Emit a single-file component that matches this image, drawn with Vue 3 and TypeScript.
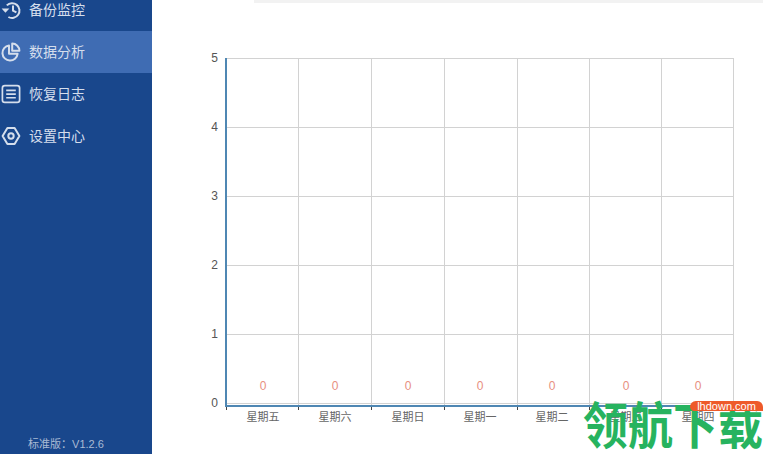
<template>
  <div class="app">
    <aside class="sidebar">
      <nav class="menu">
        <div
          v-for="item in menu"
          :key="item.label"
          class="menu-item"
          :class="{ active: item.active }"
        >
          <svg class="menu-icon" viewBox="0 0 20 20" fill="none" stroke="currentColor" stroke-width="2">
            <template v-if="item.icon === 'history'">
              <path d="M5.8 5.4A7.4 7.4 0 1 1 7.4 17" />
              <path d="M0.6 8.6L4.4 12.8L8.4 8.6Z" fill="currentColor" stroke="none" />
              <path d="M12 5.4V10.6L15.4 12.4" />
            </template>
            <template v-else-if="item.icon === 'pie'">
              <path d="M8 3.4A7.6 7.6 0 1 0 16.6 11.8H8Z" stroke-linejoin="round" />
              <path d="M11.2 1.6A7.2 7.2 0 0 1 18.4 8.8H11.2Z" stroke-linejoin="round" />
            </template>
            <template v-else-if="item.icon === 'log'">
              <rect x="1.4" y="1.6" width="17.2" height="16.8" rx="2.4" stroke-width="1.7" />
              <path d="M5.2 6.4H14.8M5.2 10.1H14.8M5.2 13.8H14.8" stroke-width="1.6" />
            </template>
            <template v-else>
              <path d="M6.4 2H13.6L18.4 10L13.6 18H6.4L1.6 10Z" stroke-linejoin="round" />
              <circle cx="10" cy="10" r="2.7" />
            </template>
          </svg>
          <span class="menu-label">{{ item.label }}</span>
        </div>
      </nav>
      <div class="version">标准版：V1.2.6</div>
    </aside>

    <main class="content">
      <div class="top-strip"></div>
      <svg class="chart" viewBox="0 0 611 454" width="611" height="454">
        <line
          v-for="y in gridY"
          :key="'h' + y"
          x1="74"
          x2="581"
          :y1="y + 0.5"
          :y2="y + 0.5"
          class="grid"
        />
        <line
          v-for="x in gridX.slice(1)"
          :key="'v' + x"
          :x1="x + 0.5"
          :x2="x + 0.5"
          y1="58"
          y2="405"
          class="grid"
        />
        <line x1="74" x2="74" y1="58" y2="407" class="axis" />
        <line x1="73" x2="581" y1="406" y2="406" class="axis" />
        <line
          v-for="x in gridX"
          :key="'t' + x"
          :x1="x + 0.5"
          :x2="x + 0.5"
          y1="407"
          y2="410"
          class="tick"
        />
        <text
          v-for="(y, i) in gridY"
          :key="'l' + y"
          x="66"
          :y="y + 4"
          class="y-label"
        >{{ 5 - i }}</text>
        <template v-for="(day, i) in days" :key="day">
          <text :x="labelX[i]" y="390" class="value">0</text>
          <text :x="labelX[i]" y="421" class="x-label">{{ day }}</text>
        </template>
      </svg>
    </main>

    <div class="watermark">
      <span class="wm-text">领航下载</span>
      <span class="wm-tag">lhdown.com</span>
    </div>
  </div>
</template>

<script setup lang="ts">
const menu = [
  { label: '备份监控', icon: 'history' },
  { label: '数据分析', icon: 'pie', active: true },
  { label: '恢复日志', icon: 'log' },
  { label: '设置中心', icon: 'gear' },
];

const days = ['星期五', '星期六', '星期日', '星期一', '星期二', '星期三', '星期四'];
const gridY = [58, 127, 196, 265, 334, 403];
const gridX = [74, 146, 219, 292, 365, 437, 509, 581];
const labelX = [111, 183, 256, 328, 400, 474, 546];
</script>

<style>
html,
body {
  margin: 0;
  background: #fff;
  overflow: hidden;
}
</style>

<style scoped>
.app {
  position: relative;
  display: flex;
  width: 763px;
  height: 454px;
  overflow: hidden;
  font-family: "Liberation Sans", "Noto Sans CJK SC", sans-serif;
}

.sidebar {
  display: flex;
  flex-direction: column;
  justify-content: space-between;
  width: 152px;
  flex-shrink: 0;
  background: #19478c;
  color: #d5deec;
}

.menu {
  margin-top: -11px;
}

.menu-item {
  display: flex;
  align-items: center;
  gap: 8px;
  height: 42px;
  padding-left: 1px;
  font-size: 14px;
}

.menu-item.active {
  background: #3f6cb3;
}

.menu-label {
  padding-bottom: 3px;
}

.menu-icon {
  width: 20px;
  height: 20px;
  flex-shrink: 0;
}

.version {
  padding: 0 20px 2px 0;
  text-align: center;
  font-size: 11px;
  line-height: 16px;
  color: #a9bad4;
}

.content {
  position: relative;
  flex: 1;
}

.top-strip {
  height: 3px;
  margin-left: 102px;
  background: #f2f2f2;
}

.chart {
  position: absolute;
  top: 0;
  left: 0;
}

.grid {
  stroke: #d2d2d2;
  stroke-width: 1;
}

.axis {
  stroke: #4f87b3;
  stroke-width: 2;
}

.tick {
  stroke: #444;
  stroke-width: 1;
}

.y-label {
  font-size: 12px;
  fill: #555;
  text-anchor: end;
}

.value {
  font-size: 12px;
  fill: #e8907f;
  text-anchor: middle;
}

.x-label {
  font-size: 11px;
  fill: #666;
  text-anchor: middle;
}

.watermark {
  position: absolute;
  right: 0;
  bottom: 0;
  width: 180px;
  height: 54px;
}

.wm-tag {
  position: absolute;
  top: 1px;
  right: 0;
  width: 73px;
  height: 10px;
  border-radius: 7px 7px 0 5px;
  background: #ee5a2a;
  color: #fff;
  font-size: 11px;
  line-height: 10px;
  text-align: center;
}

.wm-text {
  position: absolute;
  left: 0;
  top: 1px;
  font-size: 45px;
  line-height: 52px;
  font-weight: 700;
  color: #27b35f;
  white-space: nowrap;
  transform: scaleY(1.12);
}
</style>
